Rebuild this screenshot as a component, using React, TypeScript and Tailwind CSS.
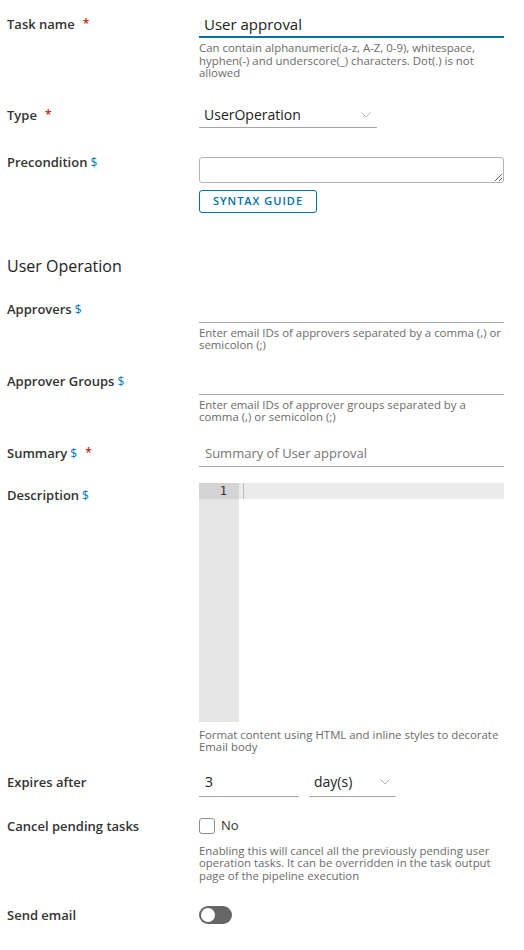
import React from "react";

const font = { fontFamily: '"Open Sans", "Liberation Sans", sans-serif' };

function Dollar() {
  return <span className="ml-[3px] text-[12px] font-normal text-[#0079b8]">$</span>;
}

function Req() {
  return <span className="ml-[8px] text-[12px] text-[#c21d00] align-top">*</span>;
}

function Label({ children }: { children: React.ReactNode }) {
  return (
    <div className="w-[192px] shrink-0 text-[13px] font-semibold leading-[20px] text-[#333]">
      {children}
    </div>
  );
}

function Help({ children, className = "" }: { children: React.ReactNode; className?: string }) {
  return <p className={"text-[11.4px] leading-[12.5px] text-[#6b6b6b] " + className}>{children}</p>;
}

function Chevron() {
  return (
    <svg width="10" height="6" viewBox="0 0 10 6" className="shrink-0">
      <path d="M0.5 0.5 L5 5 L9.5 0.5" fill="none" stroke="#b3b3b3" strokeWidth="1" />
    </svg>
  );
}

export default function App() {
  return (
    <div className="bg-white min-h-[950px] pl-[7px] pr-[20px] pt-[12px]" style={font}>
      {/* Task name */}
      <div className="flex">
        <div className="w-[192px] shrink-0 text-[13px] font-semibold leading-[24px] text-[#333]">
          Task name<Req />
        </div>
        <div className="flex-1">
          <div className="h-[26px] border-b-2 border-[#0072a3] pl-[5px] text-[15px] leading-[24px] text-[#222]">
            User approval
          </div>
          <Help className="mt-[4px]">
            Can contain alphanumeric(a-z, A-Z, 0-9), whitespace, hyphen(-) and underscore(_) characters. Dot(.) is not allowed
          </Help>
        </div>
      </div>

      {/* Type */}
      <div className="flex mt-[23px]">
        <div className="w-[192px] shrink-0 text-[13px] font-semibold leading-[24px] text-[#333]">
          Type<Req />
        </div>
        <div className="flex-1">
          <div className="w-[178px] h-[25px] border-b border-[#a6a6a6] pl-[5px] pr-[6px] flex items-center justify-between text-[14px] text-[#222]">
            <span>UserOperation</span>
            <Chevron />
          </div>
        </div>
      </div>

      {/* Precondition */}
      <div className="flex mt-[24px]">
        <Label>
          Precondition<Dollar />
        </Label>
        <div className="flex-1 pt-[5px]">
          <textarea className="block w-full h-[26px] border border-[#b3b3b3] rounded-[3px] outline-none" />
          <button className="mt-[7px] h-[23px] w-[118px] border border-[#0072a3] rounded-[3px] text-[11px] font-semibold tracking-[1px] text-[#0072a3]">
            SYNTAX GUIDE
          </button>
        </div>
      </div>

      <h2 className="mt-[41px] text-[16px] leading-[24px] text-[#222]">User Operation</h2>

      {/* Approvers */}
      <div className="flex mt-[21px]">
        <Label>
          Approvers<Dollar />
        </Label>
        <div className="flex-1">
          <div className="h-[24px] border-b border-[#a6a6a6]" />
          <Help className="mt-[4px]">Enter email IDs of approvers separated by a comma (,) or semicolon (;)</Help>
        </div>
      </div>

      {/* Approver Groups */}
      <div className="flex mt-[19px]">
        <Label>
          Approver Groups<Dollar />
        </Label>
        <div className="flex-1">
          <div className="h-[24px] border-b border-[#a6a6a6]" />
          <Help className="mt-[4px]">Enter email IDs of approver groups separated by a comma (,) or semicolon (;)</Help>
        </div>
      </div>

      {/* Summary */}
      <div className="flex mt-[19px]">
        <Label>
          Summary<Dollar />
          <Req />
        </Label>
        <div className="flex-1">
          <div className="h-[24px] border-b border-[#a6a6a6] pl-[6px] text-[13px] leading-[20px] text-[#757575]">
            Summary of User approval
          </div>
        </div>
      </div>

      {/* Description */}
      <div className="flex mt-[16px]">
        <div className="w-[192px] shrink-0 pt-[2px] text-[13px] font-semibold leading-[20px] text-[#333]">
          Description<Dollar />
        </div>
        <div className="flex-1">
          <div className="flex h-[239px]">
            <div className="w-[40px] bg-[#e6e6e6]">
              <div className="h-[16px] bg-[#d4d4d4] pr-[12px] text-right text-[12px] leading-[16px] text-[#333]" style={{ fontFamily: '"DejaVu Sans Mono", monospace' }}>
                1
              </div>
            </div>
            <div className="flex-1">
              <div className="h-[16px] bg-[#ebebeb] pl-[4px]">
                <div className="w-px h-[16px] bg-[#bbb]" />
              </div>
            </div>
          </div>
          <Help className="mt-[7px]">Format content using HTML and inline styles to decorate Email body</Help>
        </div>
      </div>

      {/* Expires after */}
      <div className="flex mt-[18px]">
        <Label>Expires after</Label>
        <div className="flex-1 flex gap-[10px]">
          <div className="w-[100px] h-[25px] border-b border-[#a6a6a6] pl-[6px] text-[14px] leading-[20px] text-[#222]">3</div>
          <div className="w-[87px] h-[25px] border-b border-[#a6a6a6] pl-[5px] pr-[6px] flex items-start justify-between text-[14px] leading-[20px] text-[#222]">
            <span>day(s)</span>
            <span className="pt-[7px]">
              <Chevron />
            </span>
          </div>
        </div>
      </div>

      {/* Cancel pending tasks */}
      <div className="flex mt-[19px]">
        <Label>Cancel pending tasks</Label>
        <div className="flex-1">
          <div className="flex items-center h-[20px] gap-[6px]">
            <div className="w-[16px] h-[16px] border border-[#8c8c8c] rounded-[3px] bg-white" />
            <span className="text-[13px] text-[#333]">No</span>
          </div>
          <Help className="mt-[9px]">
            Enabling this will cancel all the previously pending user operation tasks. It can be overridden in the task output page of the pipeline execution
          </Help>
        </div>
      </div>

      {/* Send email */}
      <div className="flex mt-[23px]">
        <Label>Send email</Label>
        <div className="flex-1 flex items-center h-[20px]">
          <div className="w-[33px] h-[18px] rounded-full bg-[#666] p-[2px] flex items-center">
            <div className="w-[14px] h-[14px] rounded-full bg-white" />
          </div>
        </div>
      </div>
    </div>
  );
}
